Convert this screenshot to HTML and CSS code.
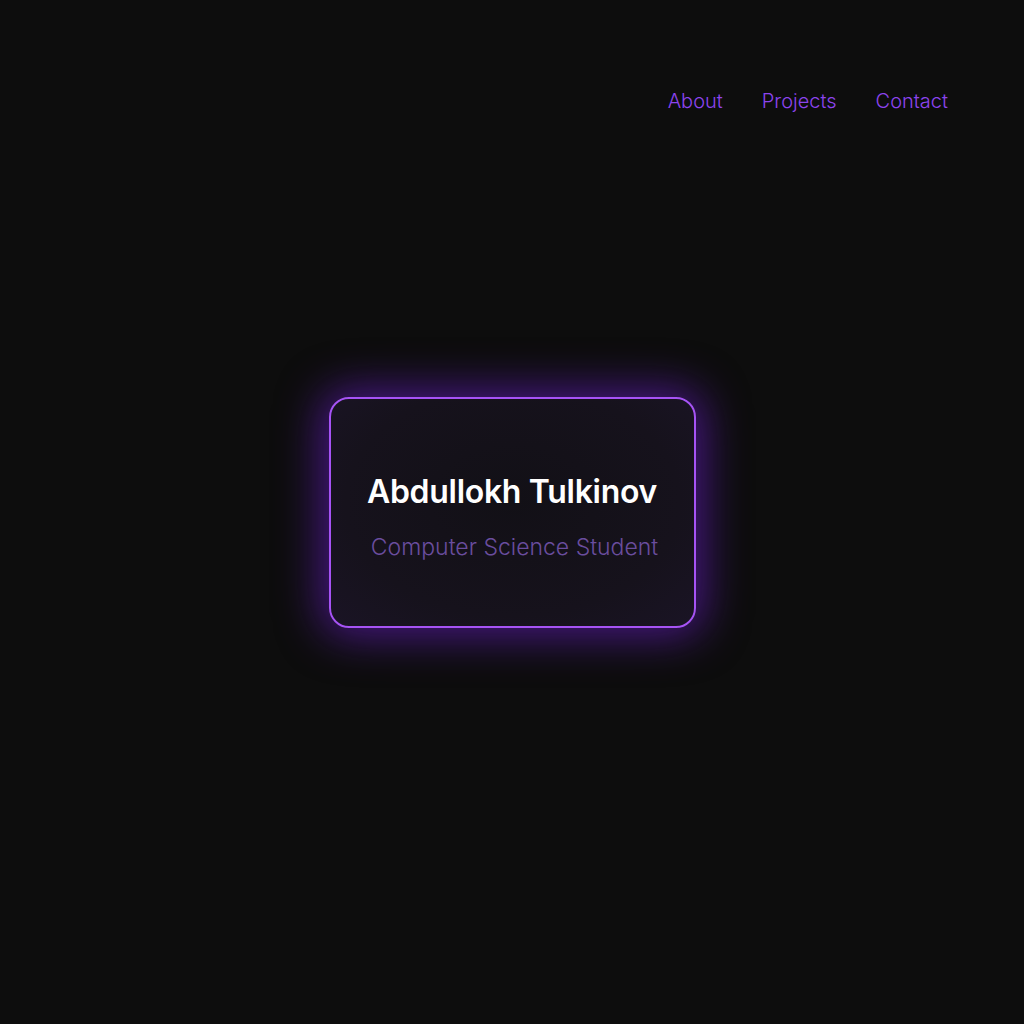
FILE: index.html
```html
<!DOCTYPE html>
<html lang="en">
<head>
<meta charset="utf-8">
<title>Abdullokh Tulkinov</title>
<link rel="stylesheet" href="styles.css">
</head>
<body>
  <header class="site-header">
    <nav class="nav">
      <a href="#about" class="nav-link">About</a>
      <a href="#projects" class="nav-link">Projects</a>
      <a href="#contact" class="nav-link">Contact</a>
    </nav>
  </header>
  <main class="hero">
    <section class="card">
      <h1 class="card-title">Abdullokh Tulkinov</h1>
      <p class="card-subtitle">Computer Science Student</p>
    </section>
  </main>
</body>
</html>
```
FILE: styles.css
```css
html, body {
  margin: 0;
  padding: 0;
}
body {
  background: #0d0d0d;
  min-height: 1024px;
  font-family: Inter, "Noto Sans", sans-serif;
}
.site-header {
  display: flex;
  justify-content: flex-end;
  padding: 89px 76px 0 0;
}
.nav {
  display: flex;
  gap: 39px;
}
.nav-link {
  color: #8c44ee;
  text-decoration: none;
  font-size: 20px;
  font-weight: 300;
  line-height: 24px;
}
.hero {
  display: flex;
  justify-content: center;
  padding-top: 284px;
}
.card {
  box-sizing: border-box;
  width: 367px;
  height: 231px;
  border: 2px solid #a653f5;
  border-radius: 20px;
  background: radial-gradient(ellipse at 50% 45%, #121016 0%, #16121c 65%, #1a1425 100%);
  box-shadow: 0 0 44px 8px rgba(110, 30, 210, 0.6);
  display: flex;
  flex-direction: column;
  align-items: center;
  padding-top: 73px;
}
.card-title {
  margin: 0;
  color: #ffffff;
  font-size: 32px;
  font-weight: 600;
  line-height: 40px;
  letter-spacing: -0.3px;
}
.card-subtitle {
  margin: 21px 0 0 5px;
  color: #6a4d9e;
  font-size: 23px;
  font-weight: 300;
  line-height: 28px;
}
```
